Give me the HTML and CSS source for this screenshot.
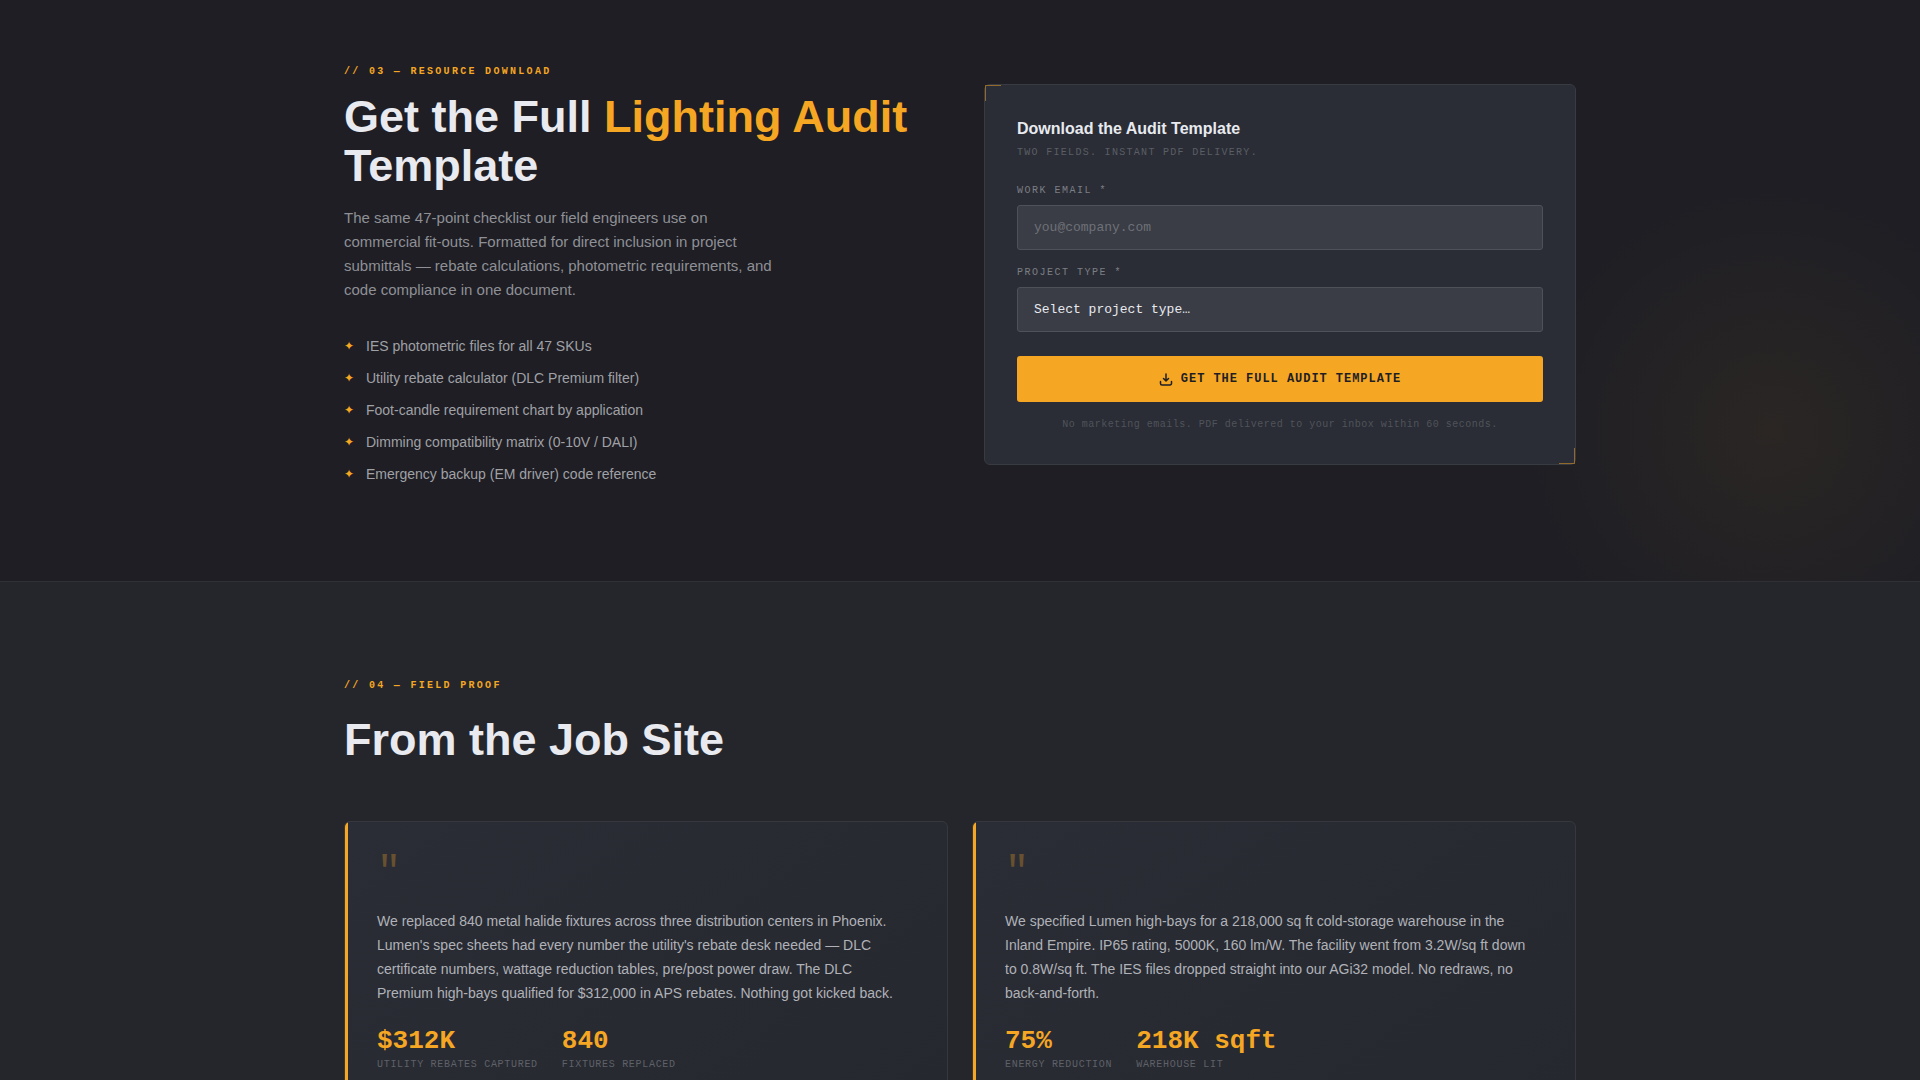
FILE: index.html
```html
<!DOCTYPE html>
<html lang="en">

<head>
    <meta charset="UTF-8" />
    <meta name="viewport" content="width=device-width, initial-scale=1.0" />
    <title>Lighting Audit Template</title>
    <link rel="stylesheet" href="styles.css">
</head>

<body>
    <section class="download">
        <div class="container download-grid">
            <div class="download-info">
                <p class="eyebrow">// 03 — Resource Download</p>
                <h2>Get the Full <span class="highlight">Lighting Audit</span> Template</h2>
                <p class="download-text">
                    The same 47-point checklist our field engineers use on commercial fit-outs. Formatted for
                    direct inclusion in project submittals — rebate calculations, photometric requirements, and
                    code compliance in one document.
                </p>
                <ul class="feature-list">
                    <li>IES photometric files for all 47 SKUs</li>
                    <li>Utility rebate calculator (DLC Premium filter)</li>
                    <li>Foot-candle requirement chart by application</li>
                    <li>Dimming compatibility matrix (0-10V / DALI)</li>
                    <li>Emergency backup (EM driver) code reference</li>
                </ul>
            </div>

            <div class="form-card">
                <h3>Download the Audit Template</h3>
                <p class="form-subtitle">Two fields. Instant PDF delivery.</p>

                <form id="audit-form">
                    <label for="workEmail">Work Email *</label>
                    <input type="email" id="workEmail" name="workEmail" placeholder="you@company.com" required />

                    <label for="projectType">Project Type *</label>
                    <select id="projectType" name="projectType" required>
                        <option value="">Select project type…</option>
                    </select>

                    <button type="submit">
                        <svg width="14" height="14" viewBox="0 0 14 14" fill="none" stroke="currentColor"
                            stroke-width="1.5" stroke-linecap="round" stroke-linejoin="round" aria-hidden="true">
                            <path d="M7 2v7M4.500 6.500L7 9l2.500-2.500" />
                            <path d="M1.500 9.500v2a1.500 1.500 0 0 0 1.500 1.500h8a1.500 1.500 0 0 0 1.500-1.500v-2" />
                        </svg>
                        Get the Full Audit Template
                    </button>
                </form>
                <p class="form-note">No marketing emails. PDF delivered to your inbox within 60 seconds.</p>
            </div>
        </div>
    </section>

    <section class="proof">
        <div class="container">
            <div class="section-header">
                <p class="eyebrow">// 04 — Field Proof</p>
                <h2>From the Job Site</h2>
            </div>

            <div class="quote-grid">
                <article class="quote-card">
                    <div class="quote-mark">"</div>
                    <p class="quote-text">
                        We replaced 840 metal halide fixtures across three distribution centers in Phoenix. Lumen's
                        spec sheets had every number the utility's rebate desk needed — DLC certificate numbers,
                        wattage reduction tables, pre/post power draw. The DLC Premium high-bays qualified for
                        $312,000 in APS rebates. Nothing got kicked back.
                    </p>
                    <div class="stats">
                        <div>
                            <div class="stat-value">$312K</div>
                            <div class="stat-label">Utility rebates captured</div>
                        </div>
                        <div>
                            <div class="stat-value">840</div>
                            <div class="stat-label">Fixtures replaced</div>
                        </div>
                    </div>
                </article>

                <article class="quote-card">
                    <div class="quote-mark">"</div>
                    <p class="quote-text">
                        We specified Lumen high-bays for a 218,000 sq ft cold-storage warehouse in the Inland Empire.
                        IP65 rating, 5000K, 160 lm/W. The facility went from 3.2W/sq ft down to 0.8W/sq ft. The IES
                        files dropped straight into our AGi32 model. No redraws, no back-and-forth.
                    </p>
                    <div class="stats">
                        <div>
                            <div class="stat-value">75%</div>
                            <div class="stat-label">Energy reduction</div>
                        </div>
                        <div>
                            <div class="stat-value">218K sqft</div>
                            <div class="stat-label">Warehouse lit</div>
                        </div>
                    </div>
                </article>
            </div>
        </div>
    </section>
</body>

</html>
```

FILE: styles.css
```css
:root {
    --amber: #f5a623;
    --text: #e8eaf0;
    --sans: "Liberation Sans", Arial, sans-serif;
    --mono: "Liberation Mono", "Courier New", monospace;
}

/* Base Styles */
*,
*::before,
*::after {
    box-sizing: border-box;
    margin: 0;
    padding: 0;
}

body {
    background-color: #24262b;
    color: var(--text);
    font-family: var(--sans);
}

.container {
    max-width: 1280px;
    margin: 0 auto;
    padding: 0 24px;
}

h2 {
    font-size: 45px;
    line-height: 49px;
    font-weight: 700;
}

.highlight {
    color: var(--amber);
}

.eyebrow {
    margin-bottom: 12px;
    color: var(--amber);
    font-family: var(--mono);
    font-size: 10px;
    font-weight: 700;
    line-height: 16px;
    letter-spacing: 0.23em;
    text-transform: uppercase;
}

/* Download Section */
.download {
    position: relative;
    overflow: hidden;
    padding: 64px 0 96px;
    background-color: #1e1e24;
}

.download::after {
    content: "";
    position: absolute;
    right: -100px;
    bottom: -100px;
    width: 500px;
    height: 500px;
    background: radial-gradient(circle, rgba(245, 166, 35, 0.06) 0%, transparent 70%);
    pointer-events: none;
}

.download-grid {
    display: grid;
    grid-template-columns: 1fr 1fr;
    gap: 48px;
    align-items: center;
}

.download-text {
    max-width: 440px;
    margin: 16px 0 33px;
    color: #8f9096;
    font-size: 15px;
    line-height: 24px;
}

.feature-list {
    display: flex;
    flex-direction: column;
    gap: 10px;
    list-style: none;
}

.feature-list li {
    display: flex;
    gap: 12px;
    color: #a0a1a6;
    font-size: 14px;
    line-height: 22px;
}

.feature-list li::before {
    content: "✦";
    color: var(--amber);
    font-size: 12px;
}

/* Form Card */
.form-card {
    position: relative;
    z-index: 1;
    padding: 32px;
    background-color: #2a2d35;
    border: 1px solid #393b42;
    border-radius: 6px;
}

.form-card::before,
.form-card::after {
    content: "";
    position: absolute;
    width: 16px;
    height: 16px;
    opacity: 0.5;
}

.form-card::before {
    top: 0;
    left: 0;
    border-top: 1px solid var(--amber);
    border-left: 1px solid var(--amber);
}

.form-card::after {
    right: 0;
    bottom: 0;
    border-right: 1px solid var(--amber);
    border-bottom: 1px solid var(--amber);
}

.form-card h3 {
    margin-bottom: 4px;
    font-size: 16px;
    line-height: 24px;
}

.form-subtitle {
    margin-bottom: 24px;
    color: #5b5e66;
    font-family: var(--mono);
    font-size: 10px;
    line-height: 15px;
    letter-spacing: 0.13em;
    text-transform: uppercase;
}

.form-card label {
    display: block;
    margin-bottom: 7px;
    color: #7c7e85;
    font-family: var(--mono);
    font-size: 10px;
    line-height: 14px;
    letter-spacing: 0.15em;
    text-transform: uppercase;
}

.form-card input,
.form-card select {
    display: block;
    width: 100%;
    height: 45px;
    margin-bottom: 16px;
    padding: 0 16px;
    appearance: none;
    background-color: #3a3d45;
    border: 1px solid #4e5158;
    border-radius: 3px;
    color: var(--text);
    font-family: var(--mono);
    font-size: 13px;
}

.form-card input::placeholder {
    color: #6e7178;
}

.form-card button {
    display: flex;
    justify-content: center;
    align-items: center;
    gap: 8px;
    width: 100%;
    height: 46px;
    margin-top: 24px;
    background-color: var(--amber);
    border: none;
    border-radius: 3px;
    color: #1e1e24;
    font-family: var(--mono);
    font-size: 12px;
    font-weight: 700;
    letter-spacing: 0.08em;
    text-transform: uppercase;
    cursor: pointer;
}

.form-note {
    margin-top: 16px;
    color: #50535b;
    font-family: var(--mono);
    font-size: 10px;
    line-height: 14px;
    letter-spacing: 0.05em;
    text-align: center;
}

/* Field Proof Section */
.proof {
    padding: 96px 0;
    border-top: 1px solid #303136;
}

.section-header {
    display: grid;
    gap: 9px;
    margin-bottom: 57px;
}

.quote-grid {
    display: grid;
    grid-template-columns: 1fr 1fr;
    gap: 24px;
}

.quote-card {
    position: relative;
    overflow: hidden;
    padding: 32px;
    background: linear-gradient(145deg, #2a2d35, #26282f);
    border: 1px solid #36383e;
    border-radius: 6px;
}

.quote-card::before {
    content: "";
    position: absolute;
    top: 0;
    bottom: 0;
    left: 0;
    width: 3px;
    background-color: var(--amber);
}

.quote-mark {
    margin-bottom: 15px;
    color: var(--amber);
    font-family: var(--mono);
    font-size: 40px;
    line-height: 40px;
    opacity: 0.3;
}

.quote-text {
    max-width: 528px;
    margin-bottom: 24px;
    color: #b0b2b8;
    font-size: 14px;
    line-height: 24px;
}

.stats {
    display: flex;
    gap: 24px;
}

.stat-value {
    margin-bottom: 4px;
    color: var(--amber);
    font-family: var(--mono);
    font-size: 26px;
    font-weight: 700;
    line-height: 24px;
}

.stat-label {
    color: #5f6168;
    font-family: var(--mono);
    font-size: 10px;
    line-height: 16px;
    letter-spacing: 0.07em;
    text-transform: uppercase;
}

@media (max-width: 900px) {
    .download-grid,
    .quote-grid {
        grid-template-columns: 1fr;
    }
}
```
